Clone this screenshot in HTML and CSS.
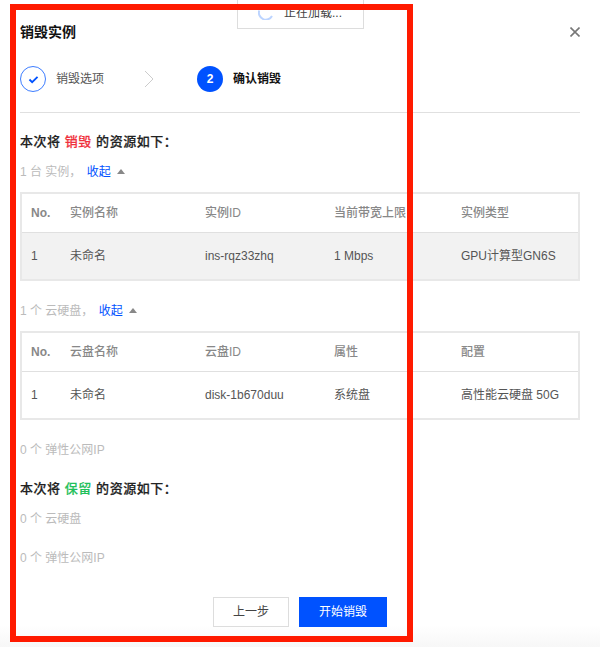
FILE: index.html
```html
<!DOCTYPE html>
<html lang="zh">
<head>
<meta charset="utf-8">
<title>销毁实例</title>
<link rel="stylesheet" href="styles.css">
</head>
<body>
<div class="dialog">
  <header class="head">
    <h1 class="title">销毁实例</h1>
    <svg class="close" viewBox="0 0 10 10" aria-label="关闭"><path d="M.5.5l9 9M9.5.5l-9 9"/></svg>
  </header>
  <nav class="steps">
    <div class="step step-one">
      <span class="badge badge-done"><svg viewBox="0 0 12 10"><path d="M1.5 5l3 3 6-6"/></svg></span>
      <span class="step-label">销毁选项</span>
    </div>
    <svg class="chev" viewBox="0 0 10 18"><path d="M1 1l8 8-8 8"/></svg>
    <div class="step">
      <span class="badge badge-now">2</span>
      <span class="step-label step-current">确认销毁</span>
    </div>
  </nav>
  <h2 class="section first">本次将 <em class="red">销毁</em> 的资源如下：</h2>
  <p class="sub sub-one">1 台 实例， <a class="link">收起</a><i class="caret"></i></p>
  <table class="grid grid-one">
    <thead><tr><th class="c1">No.</th><th class="c2">实例名称</th><th class="c3">实例ID</th><th class="c4">当前带宽上限</th><th>实例类型</th></tr></thead>
    <tbody><tr class="hl"><td>1</td><td>未命名</td><td>ins-rqz33zhq</td><td>1 Mbps</td><td>GPU计算型GN6S</td></tr></tbody>
  </table>
  <p class="sub sub-two">1 个 云硬盘， <a class="link">收起</a><i class="caret"></i></p>
  <table class="grid grid-two">
    <thead><tr><th class="c1">No.</th><th class="c2">云盘名称</th><th class="c3">云盘ID</th><th class="c4">属性</th><th>配置</th></tr></thead>
    <tbody><tr><td>1</td><td>未命名</td><td>disk-1b670duu</td><td>系统盘</td><td>高性能云硬盘 50G</td></tr></tbody>
  </table>
  <p class="sub sub-three">0 个 弹性公网IP</p>
  <h2 class="section second">本次将 <em class="green">保留</em> 的资源如下：</h2>
  <p class="sub sub-four">0 个 云硬盘</p>
  <p class="sub sub-five">0 个 弹性公网IP</p>
  <footer class="actions">
    <button class="btn">上一步</button>
    <button class="btn btn-primary">开始销毁</button>
  </footer>
</div>
<div class="loading">
  <svg class="spin" viewBox="0 0 16 16"><path d="M1.2 6.5A7 7 0 0 0 14 12"/></svg>
  <span class="loading-text">正在加载...</span>
</div>
<div class="frame"></div>
</body>
</html>
```
FILE: styles.css
```css
* { box-sizing: border-box; }
html, body { margin: 0; height: 647px; overflow: hidden; background: #fff; }
body { font: 12px/18px "Liberation Sans", "Noto Sans CJK SC", sans-serif; color: #444; }
.dialog { width: 600px; height: 647px; padding: 0 20px; background: linear-gradient(#fff 625px, #f7f7f7 647px); }
.head { display: flex; justify-content: space-between; align-items: center; height: 65px; padding-bottom: 1px; }
.title { margin: 0; font-size: 14px; font-weight: 700; color: #111; }
.close { width: 10px; height: 10px; fill: none; stroke: #777; stroke-width: 1.6; }
.steps { display: flex; align-items: center; height: 48px; padding: 1px 0 20px; border-bottom: 1px solid #e0e0e0; }
.step { display: flex; align-items: center; gap: 10px; }
.step-one { width: 124px; }
.badge { display: flex; align-items: center; justify-content: center; width: 26px; height: 26px; border-radius: 50%; font-size: 12px; font-weight: 700; }
.badge-done { border: 1.5px solid #3d7dff; }
.badge-done svg { width: 11px; height: 9px; fill: none; stroke: #0052ff; stroke-width: 2; }
.badge-now { background: #0052ff; color: #fff; }
.step-label { color: #555; }
.step-current { color: #111; font-weight: 700; }
.chev { width: 10px; height: 18px; fill: none; stroke: #ccc; margin-right: 43px; }
.section { margin: 0; font-size: 13px; font-weight: 500; line-height: 20px; letter-spacing: .55px; color: #222; -webkit-text-stroke: .2px #222; }
.section em { font-style: normal; }
.first { margin-top: 19px; }
.second { margin-top: 20px; }
.red { color: #f0303c; -webkit-text-stroke-color: #f0303c; }
.green { color: #1fc05a; -webkit-text-stroke-color: #1fc05a; }
.sub { margin: 0; color: #bbb; line-height: 18px; }
.sub-one { margin-top: 11px; }
.sub-two { margin-top: 21px; }
.sub-three { margin-top: 21px; }
.sub-four { margin-top: 11px; }
.sub-five { margin-top: 21px; }
.link { color: #0052ff; margin-left: 2px; }
.caret { display: inline-block; margin-left: 6px; vertical-align: 2px; border: 4px solid transparent; border-top: 0; border-bottom: 5px solid #888; }
.grid { width: 560px; table-layout: fixed; border-collapse: collapse; border: 2px solid #e8e8e8; margin-top: 11px; }
.grid th, .grid td { padding: 0 0 0 9px; text-align: left; white-space: nowrap; font-weight: 400; }
.grid th { height: 39px; color: #888; font-weight: 700; border-bottom: 1px solid #e0e0e0; }
.grid th:not(.c1) { font-weight: 500; }
.grid td { height: 48px; color: #555; }
.hl td { background: #f2f2f2; }
.grid th:nth-child(n+2), .grid td:nth-child(n+2) { padding-left: 0; }
.c1 { width: 49px; }
.c2 { width: 135px; }
.c3 { width: 129px; }
.c4 { width: 127px; }
.grid-two { margin-top: 11px; }
.actions { display: flex; margin: 30px 0 0 193px; gap: 10px; }
.btn { height: 30px; width: 76px; padding: 0; background: #fff; border: 1px solid #ddd; color: #444; font: inherit; }
.btn-primary { width: 88px; background: #0052ff; border-color: #0052ff; color: #fff; }
.loading { position: absolute; left: 237px; top: -6px; width: 127px; height: 35px; display: flex; align-items: center; gap: 10px; padding: 1px 0 0 20px; background: #fff; border: 1px solid #ddd; color: #444; }
.spin { width: 16px; height: 16px; fill: none; stroke: #bcd4ff; stroke-width: 2; }
.loading-text { position: relative; top: 1px; }
.frame { position: absolute; left: 10px; top: 4px; width: 403px; height: 638px; border: 6px solid #ff1a00; pointer-events: none; }
```
